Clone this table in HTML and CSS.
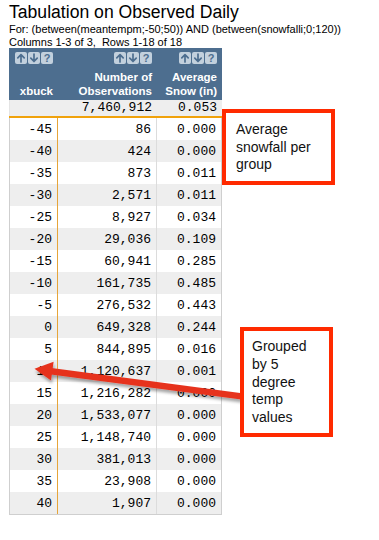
FILE: index.html
```html
<!DOCTYPE html>
<html>
<head>
<meta charset="utf-8">
<link rel="stylesheet" href="styles.css">
</head>
<body>
<div class="page">
  <h1 class="title">Tabulation on Observed Daily</h1>
  <div class="meta">For: (between(meantempm;-50;50)) AND (between(snowfalli;0;120))</div>
  <div class="meta">Columns 1-3 of 3,&nbsp; Rows 1-18 of 18</div>

  <div class="tab">
    <div class="row head">
      <div class="th">
        <div class="icons">
          <span class="ico"><svg viewBox="0 0 12 12"><path d="M6 10V2.6M2.8 5.8L6 2.6 9.2 5.8"/></svg></span>
          <span class="ico"><svg viewBox="0 0 12 12"><path d="M6 2V9.4M2.8 6.2L6 9.4 9.2 6.2"/></svg></span>
          <span class="ico q">?</span>
        </div>
        <div class="lbl">xbuck</div>
      </div>
      <div class="th">
        <div class="icons">
          <span class="ico"><svg viewBox="0 0 12 12"><path d="M6 10V2.6M2.8 5.8L6 2.6 9.2 5.8"/></svg></span>
          <span class="ico"><svg viewBox="0 0 12 12"><path d="M6 2V9.4M2.8 6.2L6 9.4 9.2 6.2"/></svg></span>
          <span class="ico q">?</span>
        </div>
        <div class="lbl">Number of<br>Observations</div>
      </div>
      <div class="th">
        <div class="icons">
          <span class="ico"><svg viewBox="0 0 12 12"><path d="M6 10V2.6M2.8 5.8L6 2.6 9.2 5.8"/></svg></span>
          <span class="ico"><svg viewBox="0 0 12 12"><path d="M6 2V9.4M2.8 6.2L6 9.4 9.2 6.2"/></svg></span>
          <span class="ico q">?</span>
        </div>
        <div class="lbl">Average<br>Snow (in)</div>
      </div>
    </div>

    <div class="row sum">
      <div class="s s1"></div><div class="s">7,460,912</div><div class="s">0.053</div>
    </div>

    <div class="row"><div class="d d1">-45</div><div class="d d2">86</div><div class="d d3">0.000</div></div>
    <div class="row alt"><div class="d d1">-40</div><div class="d d2">424</div><div class="d d3">0.000</div></div>
    <div class="row"><div class="d d1">-35</div><div class="d d2">873</div><div class="d d3">0.011</div></div>
    <div class="row alt"><div class="d d1">-30</div><div class="d d2">2,571</div><div class="d d3">0.011</div></div>
    <div class="row"><div class="d d1">-25</div><div class="d d2">8,927</div><div class="d d3">0.034</div></div>
    <div class="row alt"><div class="d d1">-20</div><div class="d d2">29,036</div><div class="d d3">0.109</div></div>
    <div class="row"><div class="d d1">-15</div><div class="d d2">60,941</div><div class="d d3">0.285</div></div>
    <div class="row alt"><div class="d d1">-10</div><div class="d d2">161,735</div><div class="d d3">0.485</div></div>
    <div class="row"><div class="d d1">-5</div><div class="d d2">276,532</div><div class="d d3">0.443</div></div>
    <div class="row alt"><div class="d d1">0</div><div class="d d2">649,328</div><div class="d d3">0.244</div></div>
    <div class="row"><div class="d d1">5</div><div class="d d2">844,895</div><div class="d d3">0.016</div></div>
    <div class="row alt"><div class="d d1">10</div><div class="d d2">1,120,637</div><div class="d d3">0.001</div></div>
    <div class="row"><div class="d d1">15</div><div class="d d2">1,216,282</div><div class="d d3">0.000</div></div>
    <div class="row alt"><div class="d d1">20</div><div class="d d2">1,533,077</div><div class="d d3">0.000</div></div>
    <div class="row"><div class="d d1">25</div><div class="d d2">1,148,740</div><div class="d d3">0.000</div></div>
    <div class="row alt"><div class="d d1">30</div><div class="d d2">381,013</div><div class="d d3">0.000</div></div>
    <div class="row"><div class="d d1">35</div><div class="d d2">23,908</div><div class="d d3">0.000</div></div>
    <div class="row alt last"><div class="d d1">40</div><div class="d d2">1,907</div><div class="d d3">0.000</div></div>
  </div>

  <svg class="arrow" width="379" height="540" viewBox="0 0 379 540">
    <defs>
      <filter id="sh" x="-10%" y="-50%" width="120%" height="200%">
        <feDropShadow dx="1" dy="3" stdDeviation="1.6" flood-color="#000" flood-opacity="0.35"/>
      </filter>
    </defs>
    <g filter="url(#sh)" fill="#e6331f" stroke="none">
      <path d="M51.6 367.9 L242 393.2 L241.2 399.6 L50.8 374.4 Z"/>
      <path d="M34.5 368.8 L53.6 361.8 L51 380.6 Z"/>
    </g>
  </svg>

  <div class="note note1">Average snowfall per group</div>
  <div class="note note2">Grouped by 5 degree temp values</div>
</div>
</body>
</html>
```

FILE: styles.css
```css
html, body {
  margin: 0;
  padding: 0;
  background: #ffffff;
}

.page {
  position: relative;
  width: 379px;
  height: 540px;
  padding-left: 9px;
  box-sizing: border-box;
  font-family: "Liberation Sans", Arial, sans-serif;
  color: #000;
}

.title {
  margin: 0;
  padding-top: 1px;
  font-size: 17.6px;
  font-weight: normal;
  line-height: 22px;
}

.meta {
  font-size: 11px;
  line-height: 12.5px;
}

.tab {
  width: 213px;
}

.row {
  display: grid;
  grid-template-columns: 49px 99px 65px;
  height: 22px;
}

.row.alt {
  background: #eeeeee;
}

.row.last {
  border-bottom: 1px solid #cfcfcf;
}

.head {
  height: 52px;
  background: #4d6e8f;
}

.th {
  display: flex;
  flex-direction: column;
  align-items: flex-end;
  padding: 4px 5px 2px 0;
  color: #ffffff;
}

.icons {
  display: flex;
  gap: 1px;
}

.ico {
  width: 12px;
  height: 12px;
  border-radius: 2px;
  background: #c2d0dd;
  display: flex;
  align-items: center;
  justify-content: center;
  color: #4d6e8f;
}

.ico svg {
  width: 12px;
  height: 12px;
  fill: none;
  stroke: #4d6e8f;
  stroke-width: 1.7;
  stroke-linecap: round;
  stroke-linejoin: round;
}

.ico.q {
  font-size: 11px;
  font-weight: bold;
  line-height: 12px;
}

.lbl {
  margin-top: auto;
  text-align: right;
  font-size: 11.5px;
  font-weight: bold;
  line-height: 14px;
  white-space: nowrap;
}

.sum {
  height: 18px;
  box-sizing: border-box;
  background: #eeeeee;
  border-bottom: 2px solid #f0a20c;
}

.s, .d {
  box-sizing: border-box;
  font-family: "Liberation Mono", "Courier New", monospace;
  font-size: 13px;
  text-align: right;
  white-space: nowrap;
}

.s {
  line-height: 16px;
  padding-right: 5px;
}

.s1 {
  border-left: 1px solid #e4e4e4;
}

.d {
  line-height: 20px;
  padding-top: 2px;
  padding-right: 5px;
}

.d1 {
  border-left: 1px solid #cfcfcf;
  border-right: 1px solid #e6a53a;
}

.d2 {
  border-right: 1px solid #dcdcdc;
}

.d3 {
  border-right: 1px solid #cfcfcf;
}

.arrow {
  position: absolute;
  left: 0;
  top: 0;
  pointer-events: none;
}

.note {
  position: absolute;
  box-sizing: border-box;
  background: #ffffff;
  border: 4px solid #ff2a00;
  font-family: "Liberation Sans", Arial, sans-serif;
  font-size: 14px;
  line-height: 17.5px;
  color: #111;
}

.note1 {
  left: 222px;
  top: 109px;
  width: 113px;
  height: 76px;
  padding: 8px 6px 0 10px;
}

.note2 {
  left: 240px;
  top: 327px;
  width: 93px;
  height: 110px;
  padding: 7px 4px 0 8px;
  line-height: 17.75px;
}
```
